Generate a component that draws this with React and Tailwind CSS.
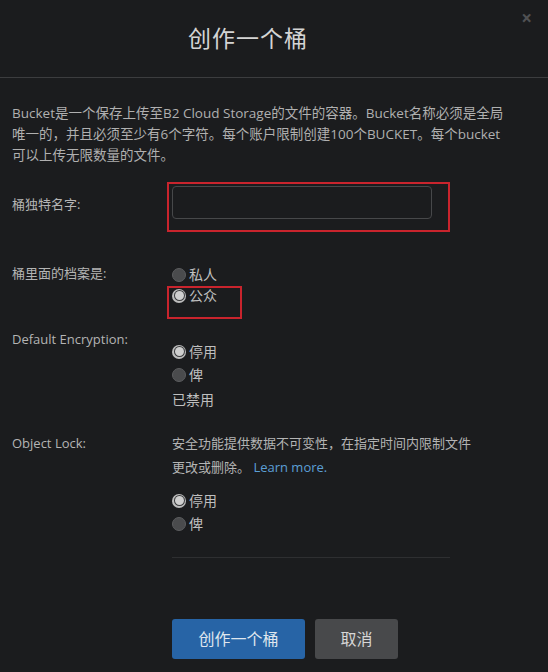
import React from "react";

function Radio({ checked, label }) {
  return (
    <div className="flex h-[23px] items-center gap-[3px]">
      {checked ? (
        <span className="flex h-[14px] w-[14px] items-center justify-center rounded-full bg-[#bdbdbd]">
          <span className="flex h-[11px] w-[11px] items-center justify-center rounded-full bg-[#3a3b3d]">
            <span className="h-[9px] w-[9px] rounded-full bg-[#cfcfcf]" />
          </span>
        </span>
      ) : (
        <span className="h-[14px] w-[14px] rounded-full border border-[#5c5d5f] bg-[#4a4b4d]" />
      )}
      <span className="text-[14px] text-[#bfbfbf]">{label}</span>
    </div>
  );
}

export default function App() {
  return (
    <div
      className="h-[672px] w-[548px] overflow-hidden bg-[#1b1c1e] text-[#b4b4b4]"
      style={{ fontFamily: '"Open Sans", "Noto Sans CJK SC", sans-serif' }}
    >
      {/* header */}
      <div className="relative flex h-[78px] items-center justify-center border-b border-[#3c3d3f] pr-[52px]">
        <h1 className="text-[23px] font-normal tracking-[1px] text-[#d4d4d4]">创作一个桶</h1>
        <span className="absolute right-[16px] top-[4px] text-[19px] font-bold text-[#505153]">×</span>
      </div>

      <div className="px-3">
        <p className="mt-[25px] text-[13.5px] leading-[21px] text-[#b0b0b0]">
          Bucket是一个保存上传至B2 Cloud Storage的文件的容器。Bucket名称必须是全局
          <br />
          唯一的，并且必须至少有6个字符。每个账户限制创建100个BUCKET。每个bucket
          <br />
          可以上传无限数量的文件。
        </p>

        {/* bucket name */}
        <div className="mt-[16px] flex">
          <div className="w-[155px] pt-[13px] text-[13px]">桶独特名字:</div>
          <div className="w-[283px] border-2 border-[#c9242d] pb-[11px] pl-[3px] pr-[16px] pt-[2px]">
            <div className="h-[33px] rounded-[4px] border border-[#47484a] bg-[#1b1c1e]" />
          </div>
        </div>

        {/* visibility */}
        <div className="mt-[33px] flex">
          <div className="mt-[-2px] w-[160px] text-[13px] leading-[20px]">桶里面的档案是:</div>
          <div className="flex flex-col">
            <div className="mt-[-2px]">
              <Radio label="私人" />
            </div>
            <div className="ml-[-5px] h-[33px] w-[75px] border-2 border-[#c9242d] pl-[3px]">
              <div className="mt-[-4px]">
                <Radio checked label="公众" />
              </div>
            </div>
          </div>
        </div>

        {/* encryption */}
        <div className="mt-[10px] flex">
          <div className="w-[160px] text-[13px] leading-[20px]">Default Encryption:</div>
          <div className="flex flex-col pt-[11px]">
            <Radio checked label="停用" />
            <Radio label="俾" />
            <div className="mt-[2px] text-[14px] leading-[23px] text-[#bfbfbf]">已禁用</div>
          </div>
        </div>

        {/* object lock */}
        <div className="mt-[20px] flex">
          <div className="w-[160px] text-[13px] leading-[24px]">Object Lock:</div>
          <div className="w-[278px]">
            <p className="whitespace-nowrap text-[13px] leading-[24px] text-[#b4b4b4]">
              安全功能提供数据不可变性，在指定时间内限制文件
              <br />
              更改或删除。 <span className="text-[#5b9fd6]">Learn more.</span>
            </p>
            <div className="mt-[10px] flex flex-col">
              <Radio checked label="停用" />
              <Radio label="俾" />
            </div>
            <div className="mt-[22px] border-t border-[#2e2f31]" />
          </div>
        </div>

        {/* buttons */}
        <div className="ml-[160px] mt-[61px] flex gap-[10px]">
          <button className="h-[40px] w-[133px] rounded-[3px] bg-[#2764a6] text-[16px] text-[#dfe6ee]">
            创作一个桶
          </button>
          <button className="h-[40px] w-[83px] rounded-[3px] bg-[#48494b] text-[16px] text-[#d6d6d6]">
            取消
          </button>
        </div>
      </div>
    </div>
  );
}
